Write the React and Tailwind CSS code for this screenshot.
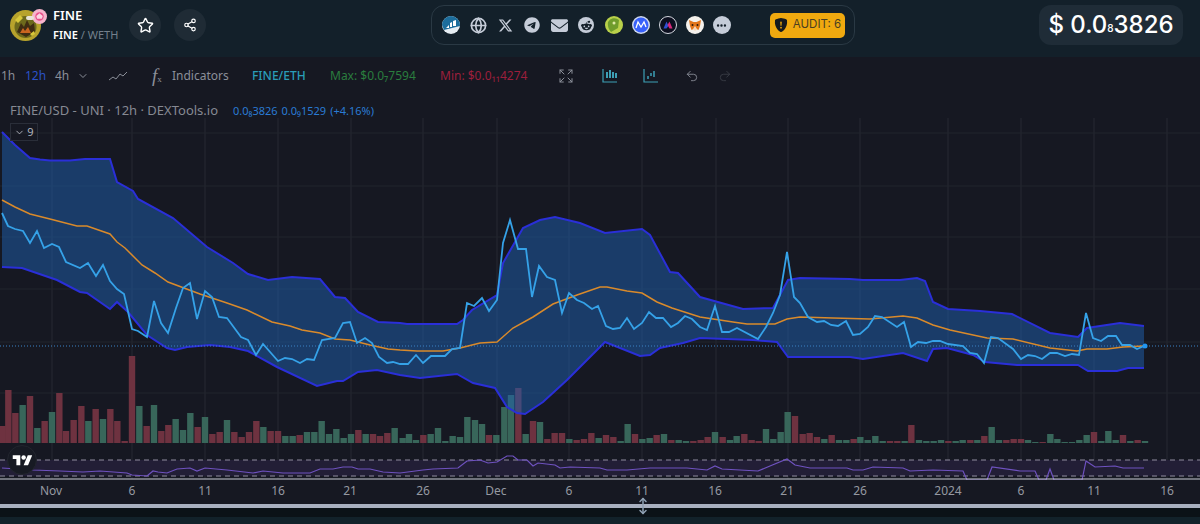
import { Star, Share2, Globe, MoveVertical, ChevronDown, Expand, Undo2, Redo2 } from 'lucide-react'
import { FaXTwitter, FaTelegram, FaEnvelope, FaEllipsis, FaRedditAlien } from 'react-icons/fa6'
import { BsShieldFillExclamation } from 'react-icons/bs'

const sans = 'font-["Noto_Sans",sans-serif]'

const UPPER = '2,132 15,145 30,158 40,159.5 50,160.5 70,160.5 85,159 110,159 117,182 133,191 138,199 173,218 207,247 233,263 248,274 268,280 292,277 320,279 335,297 345,298 358,312 378,322 400,323 407,324 457,324 463,320 472,310 497,295 503,263 523,228 540,220 555,217 580,223 605,233 642,229 650,235 670,272 678,273 700,297 743,309 773,308 788,280 800,278 850,279 863,280 900,280 917,278 925,281 933,302 948,309 980,311 1012,314 1050,333 1078,337 1087,328 1120,323 1144,326'
const LOWER = '2,267 22,268 57,280 80,292 87,293 110,309 117,302 128,312 147,335 167,348 175,350 187,347 210,345 230,347 248,351 277,367 317,386 337,381 343,381 358,372 377,370 400,375 420,378 457,374 473,383 495,388 507,407 517,413 525,414 543,402 567,380 605,342 640,356 650,355 660,348 683,343 700,338 753,340 777,342 788,357 800,357 850,357 863,359 903,353 927,361 933,349 947,348 973,355 985,362 1017,365 1040,365 1078,365 1088,371 1117,371 1128,368 1144,368'
const PRICE = '2,213 8,226 15,229 23,231 30,243 37,231 44,248 52,244 59,247 66,262 80,268 88,263 96,276 103,265 110,281 117,289 124,294 132,329 138,331 147,337 154,301 161,323 168,333 176,308 183,288 190,283 197,319 205,291 212,297 219,317 227,318 241,337 248,340 256,355 263,344 278,361 285,358 292,359 300,363 307,359 314,360 322,340 335,338 343,323 350,322 357,343 365,338 372,343 379,357 387,363 393,362 400,364 408,364 416,355 423,363 431,356 445,356 452,349 460,348 467,303 474,306 482,298 489,311 497,300 503,243 510,220 518,249 526,249 532,297 539,266 547,277 555,280 562,313 569,293 577,300 584,303 592,309 598,306 606,326 613,329 620,328 627,318 634,329 642,323 649,312 656,318 663,318 671,327 678,323 685,316 692,319 700,327 707,330 715,306 722,332 729,332 737,328 758,339 766,327 773,313 780,295 787,252 794,297 800,303 808,317 817,322 824,321 831,325 838,326 846,321 853,335 860,334 868,327 875,316 882,317 897,327 904,322 911,347 918,342 926,343 933,341 940,341 948,344 963,346 970,353 977,354 984,363 991,337 998,338 1013,349 1021,359 1028,355 1035,356 1042,359 1050,353 1057,353 1065,356 1072,354 1079,355 1086,313 1093,338 1101,341 1108,336 1116,336 1122,345 1130,345 1137,349 1144,346'
const MA = '2,200 15,207 30,214 50,219 77,226 87,226 110,234 117,242 125,248 142,265 155,273 168,282 200,294 227,303 247,310 272,322 290,326 302,330 320,333 335,339 350,340 370,345 388,349 400,350 417,351 443,351 460,348 480,343 497,342 513,328 533,317 553,304 577,295 600,287 607,287 627,291 642,293 657,302 672,308 700,317 733,322 747,324 775,324 787,319 800,317 833,318 870,319 903,316 917,318 933,325 950,330 987,338 1013,339 1050,348 1077,351 1087,349 1107,349 1123,347 1144,346'
const RSI = '2,468 33,470 60,471 83,472 100,471 127,473 132,475 147,476 153,471 158,472 167,473 177,469 190,468 197,471 205,468 227,470 253,473 263,471 283,473 310,473 320,469 333,469 343,467 352,467 358,469 370,469 383,472 400,473 423,470 433,469 458,468 467,461 480,460 488,463 497,462 507,456 513,456 518,460 527,460 533,466 538,463 555,465 560,468 570,467 600,468 607,470 627,470 650,468 687,468 707,470 715,466 722,469 758,471 770,466 787,459 795,465 800,466 810,468 847,468 853,470 863,470 873,467 903,468 910,471 933,470 963,471 967,480 987,480 992,467 1020,471 1035,471 1039,480 1046,480 1050,469 1054,480 1082,480 1086,461 1095,467 1115,466 1123,468 1144,468'

// volume bars: colour, x (3x zoomed px), height
const VOL_A = 'r8:17 r25:53 r46:30 g68:38 r90:47 g112:15 r134:22 g156:31 r178:50 r198:12 r221:23 r244:37 g265:22 r287:34 g309:24 r331:34 r352:22 r374:2 r396:87 g418:37 r440:17 g462:38 r484:12 r505:18 g527:24 g549:13 g571:30 r593:16 g615:26 r637:9 r659:11 g681:23 r703:11 r725:6 r747:11 r769:22 g790:16 r812:12 r834:12 g856:7 g878:7 r899:8 g921:11 g943:11 g965:22 g987:9 g1009:14 g1031:5 g1053:9 r1075:13 g1097:9 r1119:9 r1140:7 r1162:10 g1184:15'
const VOL_B = 'g1208:5 g1227:9 g1248:3 r1270:8 g1292:9 g1314:15 g1336:2 g1358:7 g1380:6 g1402:26 g1425:23 g1446:19 r1467:8 g1489:8 g1513:36 g1533:48 r1555:55 g1577:9 r1599:22 g1620:21 r1642:4 r1664:10 r1686:10 g1708:4 r1730:3 r1752:4 r1774:10 g1796:5 r1818:8 r1840:6 g1862:2 g1883:19 r1905:9 g1927:4 g1949:5 r1970:8 g1992:9 r2014:3 g2036:3 g2058:2 r2080:2 r2102:3 r2123:6 g2145:11 r2168:6 g2190:3 g2210:7 r2233:9 r2255:3 r2276:2 g2298:14 g2320:4 g2342:11 g2363:31 r2385:27'
const VOL_C = 'r2408:9 r2429:10 r2451:6 g2473:4 r2495:8 g2517:3 g2539:3 r2561:4 g2581:6 g2603:3 g2626:7 g2648:2 r2670:2 r2692:2 g2714:2 r2734:18 g2757:3 g2779:2 g2801:2 g2823:3 r2845:2 g2867:2 g2888:3 r2911:3 g2932:3 r2953:7 g2975:16 g2997:3 r3019:3 r3041:4 r3063:4 g3084:3 g3106:1 r3128:1 g3151:9 g3172:4 g3194:1 g3216:1 g3238:3 g3260:8 r3282:11 g3304:2 g3325:12 g3347:3 r3369:8 g3391:2 r3413:3 g3435:2'
const BARS = `${VOL_A} ${VOL_B} ${VOL_C}`.split(' ').map(b => {
  const [x, h] = b.slice(1).split(':').map(Number)
  return { red: b[0] === 'r', x: x / 3, h }
})

const VERTICAL = [52, 132, 205, 278, 351, 423, 497, 569, 642, 716, 788, 860, 948, 1021, 1094, 1167]
const HORIZONTAL = [133, 186, 237, 289, 342, 393]
const DATES = [[51, 'Nov'], [132, '6'], [205, '11'], [278, '16'], [350, '21'], [423, '26'], [496, 'Dec'], [569, '6'], [642, '11'], [715, '16'], [787, '21'], [860, '26'], [948, '2024'], [1021, '6'], [1094, '11'], [1167, '16']]

function TokenLogo() {
  return (
    <div className="relative w-[31px] h-[31px] shrink-0">
      <svg viewBox="0 0 31 31" className="w-[31px] h-[31px]">
        <circle cx="15.5" cy="15.5" r="15.5" fill="#b7a32c" />
        <circle cx="15.5" cy="17" r="11" fill="#6d6a1c" />
        <path d="M7 22l4-9 3 4 3-7 3 6 4-3 1 9-9 5z" fill="#3f2d12" />
        <path d="M10 23l3-5 2 3 3-4 3 6z" fill="#c9651f" />
        <path d="M5 10l5-5 3 3-5 5zM20 24l4-3 1 3-3 2z" fill="#d8c83a" />
      </svg>
      <svg viewBox="0 0 16 16" className="absolute -right-[6px] -top-[1px] w-[15px] h-[15px]">
        <circle cx="8" cy="8" r="8" fill="#f6b4cc" />
        <circle cx="8" cy="8" r="4.5" fill="#e8508a" />
        <path d="M4.5 7.5l3.5-3 3.5 3-1 3h-5z" fill="#fbd5e3" />
      </svg>
      <div className="absolute left-[16px] top-[6px] w-[8px] h-[4px] bg-[#e8e4d8] rounded-sm" />
    </div>
  )
}

function RoundButton({ children }) {
  return <button className="w-[32px] h-[32px] rounded-full bg-[#1f2b35] flex items-center justify-center text-white">{children}</button>
}

function Socials() {
  const slot = 'w-[18px] h-[18px] flex items-center justify-center text-[#c5ccd8]'
  return (
    <div className="flex items-center gap-[9.1px]">
      <svg viewBox="0 0 18 18" className="w-[18px] h-[18px]">
        <circle cx="9" cy="9" r="9" fill="#e6edf3" />
        <path d="M0 9a9 9 0 0 1 18 0v1L2 14z" fill="#1c6d9c" />
        <path d="M4 12l3-3v3zM8 11V7l2-1v5zM11 10V5l3-1v6z" fill="#fff" />
      </svg>
      <div className={slot}><Globe size={17} strokeWidth={2.4} /></div>
      <div className={slot}><FaXTwitter size={15} /></div>
      <div className={slot}><FaTelegram size={16} /></div>
      <div className={slot}><FaEnvelope size={17} /></div>
      <div className={slot}>
        <span className="w-[16px] h-[16px] rounded-full bg-[#c5ccd8] flex items-center justify-center text-[#131e28]"><FaRedditAlien size={11} /></span>
      </div>
      <svg viewBox="0 0 18 18" className="w-[18px] h-[18px]">
        <circle cx="9" cy="9" r="9" fill="#b9d04a" />
        <path d="M3 6a7 7 0 0 1 11-2l-1 8-7 4C3 13 2.500 9 3 6z" fill="#6f9c2c" />
        <circle cx="9" cy="7" r="1.500" fill="#dfe9a8" />
      </svg>
      <svg viewBox="0 0 18 18" className="w-[18px] h-[18px]">
        <circle cx="9" cy="9" r="9" fill="#cfd8ee" />
        <circle cx="9" cy="9" r="7.500" fill="#3861fb" />
        <path d="M4 12l2-6 3 5 3-5 2 5" fill="none" stroke="#fff" strokeWidth="1.300" />
      </svg>
      <svg viewBox="0 0 18 18" className="w-[18px] h-[18px]">
        <circle cx="9" cy="9" r="8.500" fill="#0c0f1f" stroke="#d5d8e0" />
        <path d="M4.500 12.500L7.500 5.500 9.500 10l-2 2.500z" fill="#2f4fd0" />
        <path d="M8.500 9L10.500 5.500 13.500 12.500h-3z" fill="#d8287a" />
      </svg>
      <svg viewBox="0 0 18 18" className="w-[18px] h-[18px]">
        <circle cx="9" cy="9" r="9" fill="#f4f1ec" />
        <path d="M3 4l4.500 2h3L15 4l-1 6-1.500 4-2-1h-3l-2 1L4 10z" fill="#e2761b" />
        <path d="M7 13l2-3 2 3-1 1.500H8z" fill="#f6d7b8" />
        <circle cx="6.500" cy="9" r="1" fill="#2b1a0c" />
        <circle cx="11.500" cy="9" r="1" fill="#2b1a0c" />
      </svg>
      <div className="w-[18px] h-[18px] rounded-full bg-[#c5ccd8] flex items-center justify-center text-[#131e28]"><FaEllipsis size={11} /></div>
    </div>
  )
}

function Header() {
  return (
    <header className="h-[57px] shrink-0 bg-[#13202a] flex items-center pl-[10px] pr-[17px] pb-[7px] font-[Inter,sans-serif]">
      <TokenLogo />
      <div className={`ml-[12px] w-[77px] ${sans} text-white`}>
        <div className="text-[13px] leading-[17px] font-semibold">FINE</div>
        <div className="text-[11px] leading-[18px] mt-[2px]">
          <span className="font-semibold">FINE</span>
          <span className="text-[#74808c]"> / WETH</span>
        </div>
      </div>
      <div className="flex gap-[13px] ml-[-1px]">
        <RoundButton><Star size={17} /></RoundButton>
        <RoundButton><Share2 size={14} /></RoundButton>
      </div>
      <div className="ml-[225px] w-[424px] h-[40px] rounded-[13px] border border-[#2a3944] flex items-center pl-[10px] pr-[9px] justify-between">
        <Socials />
        <div className="w-[75px] h-[25px] rounded-[5px] bg-[#f0a90f] flex items-center justify-center gap-[5px] text-[#4a3f22] text-[11.500px]">
          <BsShieldFillExclamation size={14} className="text-[#15191d]" />
          AUDIT: 6
        </div>
      </div>
      <div className="ml-auto w-[144px] h-[40px] rounded-[12px] bg-[#1f2c37] text-white text-[24px] font-medium flex items-center justify-center">
        $ 0.0<span className="text-[10px] self-end mb-[9px]">8</span>3826
      </div>
    </header>
  )
}

function Toolbar() {
  const cyan = 'text-[#3d9fb5]'
  return (
    <div className={`h-[38px] shrink-0 flex items-center text-[12px] whitespace-nowrap text-[#8b8f99] ${sans}`}>
      <span className="ml-[1px] w-[13px]">1h</span>
      <span className="ml-[11px] w-[19px] text-[#2b52c9]">12h</span>
      <span className="ml-[11px] w-[13px]">4h</span>
      <ChevronDown size={12} className="ml-[9px]" />
      <svg viewBox="0 0 18 10" className="ml-[20px] w-[18px] h-[10px]" fill="none" stroke="#8b8f99" strokeWidth="1">
        <path d="M0 9l4-3 3 2 4-5 3 2 4-4" />
      </svg>
      <span className="ml-[25px] w-[14px] h-[20px] font-['Liberation_Serif',serif] italic text-[19px] leading-[20px]">f<span className="text-[9px] not-italic">x</span></span>
      <span className="ml-[6px] w-[55px]">Indicators</span>
      <span className="ml-[25px] w-[53px] font-medium text-[#2a9db8]">FINE/ETH</span>
      <span className="ml-[25px] w-[84px] text-[#2a7d3e]">Max: $0.0₇7594</span>
      <span className="ml-[26px] w-[88px] text-[#9c1f3c]">Min: $0.0₁₁4274</span>
      <Expand size={16} strokeWidth={1.5} className="ml-[30px]" />
      <svg viewBox="0 0 16 14" className={`ml-[28px] w-[16px] h-[14px] ${cyan}`} fill="none" stroke="currentColor">
        <path d="M1 0v13h14" strokeWidth="1.200" />
        <path d="M5 3v6M8 1v8M11 3v6M14 4v5" strokeWidth="2" />
      </svg>
      <svg viewBox="0 0 16 14" className={`ml-[25px] w-[16px] h-[14px] ${cyan}`} fill="none" stroke="currentColor">
        <path d="M1 0v13h14" strokeWidth="1.200" />
        <path d="M5 7v3M8 4v3M11 2v6" strokeWidth="1.500" />
      </svg>
      <Undo2 size={14} strokeWidth={1.5} className="ml-[26px]" />
      <Redo2 size={14} strokeWidth={1.5} className="ml-[19px] text-[#3a3e47]" />
    </div>
  )
}

function Plot() {
  const area = `${UPPER} ${LOWER.split(' ').reverse().join(' ')}`
  return (
    <svg viewBox="0 95 1200 409" className="block w-[1200px] h-[409px]">
      {VERTICAL.map(x => <line key={x} x1={x} x2={x} y1="118" y2="479" stroke="#262932" />)}
      {HORIZONTAL.map(y => <line key={y} x1="0" x2="1200" y1={y} y2={y} stroke="#21242d" />)}
      {BARS.map((b, i) => (
        <rect key={i} x={b.x - 3.2} y={443 - b.h} width="6.400" height={b.h} fill={b.red ? '#6e3240' : '#38665a'} />
      ))}
      <polygon points={area} fill="#1d5fb0" fillOpacity="0.5" />
      <polyline points={UPPER} fill="none" stroke="#2a2fd8" strokeWidth="2" />
      <polyline points={LOWER} fill="none" stroke="#2a2fd8" strokeWidth="2" />
      <line x1="0" x2="1200" y1="346" y2="346" stroke="#3b82c4" strokeDasharray="1 2" />
      <polyline points={MA} fill="none" stroke="#d98a2b" strokeWidth="1.500" />
      <polyline points={PRICE} fill="none" stroke="#35a2e8" strokeWidth="1.800" />
      <circle cx="1145" cy="346" r="2.500" fill="#2196f3" />

      {/* rsi pane */}
      <rect x="0" y="460" width="1200" height="16" fill="#221e36" />
      <line x1="0" x2="1200" y1="460" y2="460" stroke="#8f8b9e" strokeDasharray="5 4" />
      <line x1="0" x2="1200" y1="476" y2="476" stroke="#8f8b9e" strokeDasharray="5 4" />
      <polyline points={RSI} fill="none" stroke="#6f52c0" strokeWidth="1.200" />
      <line x1="0" x2="1200" y1="479" y2="479" stroke="#c9ccd6" strokeWidth="1.200" />
      <rect x="0" y="480" width="1200" height="24" fill="#161822" />
      <circle cx="22" cy="460" r="14.500" fill="#171a23" stroke="#22252e" />
      <svg x="12.500" y="454" width="20" height="13" viewBox="0 4 36 19" fill="#fff">
        <path d="M14 22H7V11H0V4h14v18zM28 22h-8l7.500-18h8L28 22z" />
        <circle cx="20" cy="8" r="4" />
      </svg>

      {DATES.map(([x, label]) => (
        <text key={x} x={x} y="495" textAnchor="middle" fontSize="12" fontFamily="Noto Sans, sans-serif" fill="#9598a1">{label}</text>
      ))}
    </svg>
  )
}

function Legend() {
  return (
    <div className={`absolute left-[10px] top-[7px] ${sans}`}>
      <div className="flex items-center h-[18px]">
        <span className="w-[210px] whitespace-nowrap text-[13px] text-[#868993]">FINE/USD - UNI · 12h · DEXTools.io</span>
        <span className="ml-[13px] text-[11px] text-[#2a7bd4] flex gap-[4px] whitespace-nowrap">
          <span>0.0₈3826</span>
          <span>0.0₉1529</span>
          <span>(+4.16%)</span>
        </span>
      </div>
      <div className="mt-[3px] w-[28px] h-[18px] border border-[#2a2e39] flex items-center justify-center gap-[2px] text-[#b2b5be] text-[11px]">
        <ChevronDown size={11} />9
      </div>
    </div>
  )
}

export default function App() {
  return (
    <div className="relative w-[1200px] h-[524px] overflow-hidden bg-[#161822] flex flex-col">
      <Header />
      <Toolbar />
      <div className="relative shrink-0">
        <Plot />
        <Legend />
      </div>
      <div className="h-[4px] shrink-0 bg-[#a9b0c0]" />
      <div className="h-[9px] shrink-0 bg-[#0b1217]" />
      <div className="flex-1 bg-[#12222a]" />
      <MoveVertical size={18} strokeWidth={2} className="absolute left-[634px] top-[497px] text-[#8fa0b3]" />
    </div>
  )
}
